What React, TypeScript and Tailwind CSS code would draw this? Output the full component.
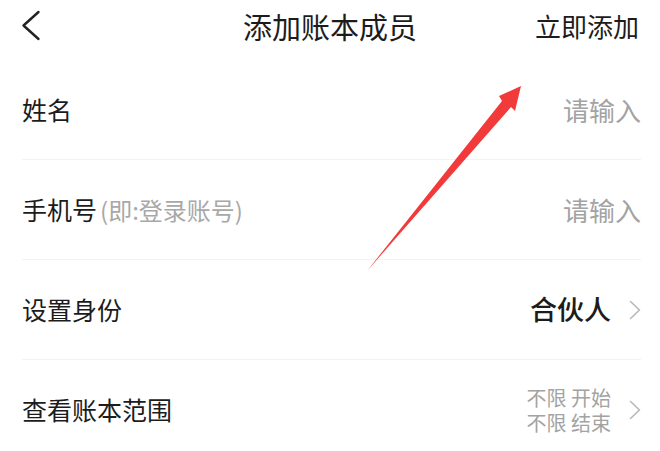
import { ReactNode } from 'react'

const font = { fontFamily: '"Noto Sans CJK SC", "Noto Sans", sans-serif' }

function Chevron() {
  return (
    <svg className="ml-[18px] h-[20px] w-[12px] shrink-0" viewBox="0 0 12 20" fill="none">
      <path d="M1.5 1.5 L10.5 10 L1.5 18.5" stroke="#b8b8b8" strokeWidth="1.6" strokeLinecap="round" strokeLinejoin="round" />
    </svg>
  )
}

function Row({ label, right, last }: { label: ReactNode; right: ReactNode; last?: boolean }) {
  return (
    <div
      className={`flex h-[100px] items-center justify-between ${last ? '' : 'border-b border-[#f3f3f3]'}`}
    >
      <div className="flex items-center text-[25px] text-[#1c1c1c]">{label}</div>
      <div className="flex items-center">{right}</div>
    </div>
  )
}

export default function App() {
  return (
    <div className="relative h-[451px] w-[660px] overflow-hidden bg-white" style={font}>
      <header className="relative flex h-[52px] items-center justify-center">
        <svg className="absolute top-[10px] left-[21px] h-[32px] w-[20px]" viewBox="0 0 20 32" fill="none">
          <path d="M17.5 2 L2.5 15.5 L17.5 29" stroke="#222" strokeWidth="2.4" strokeLinecap="round" strokeLinejoin="round" />
        </svg>
        <h1 className="text-[29px] leading-none text-[#1c1c1c]">添加账本成员</h1>
        <span className="absolute right-[21px] text-[26px] leading-none text-[#1c1c1c]">立即添加</span>
      </header>

      <main className="mt-[8px] px-[22px] pr-[19px]">
        <Row label="姓名" right={<span className="text-[26px] text-[#a3a3a3]">请输入</span>} />
        <Row
          label={
            <>
              手机号
              <span className="ml-[3px] text-[24px] text-[#a8a8a8]">(即:登录账号)</span>
            </>
          }
          right={<span className="text-[26px] text-[#a3a3a3]">请输入</span>}
        />
        <Row
          label="设置身份"
          right={
            <>
              <span className="text-[27px] font-medium text-[#1c1c1c]">合伙人</span>
              <Chevron />
            </>
          }
        />
        <Row
          last
          label="查看账本范围"
          right={
            <>
              <div className="flex flex-col items-end text-[20px] leading-[25px] text-[#a3a3a3]">
                <span>不限 开始</span>
                <span>不限 结束</span>
              </div>
              <Chevron />
            </>
          }
        />
      </main>

      <svg className="pointer-events-none absolute inset-0" width="660" height="451" viewBox="0 0 660 451">
        <polygon
          points="367,271 502,101 499,96 521,86 515,111 511,107"
          fill="#f23a3a"
        />
      </svg>
    </div>
  )
}
